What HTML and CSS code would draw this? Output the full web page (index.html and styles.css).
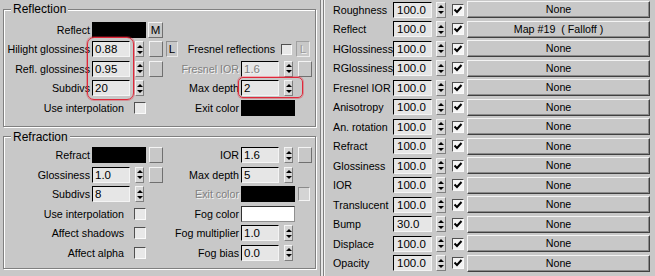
FILE: index.html
```html
<!DOCTYPE html>
<html lang="en">
<head>
    <meta charset="UTF-8">
    <meta name="viewport" content="width=device-width, initial-scale=1.0">
    <title>VRayMtl - Basic parameters / Maps</title>
    <link rel="stylesheet" href="styles.css">
</head>
<body>
    <div class="editor">
        <!-- Basic parameters rollout -->
        <div class="params">
            <fieldset class="group">
                <legend>Reflection</legend>
                <div class="rows">
                    <span class="lbl">Reflect</span>
                    <div class="ctl"><span class="swatch"></span><span class="btn wide">M</span></div>
                    <span></span><span></span>

                    <span class="lbl">Hilight glossiness</span>
                    <div class="ctl"><span class="field">0.88</span><span class="spin"></span><span class="btn"></span><span class="btn letter">L</span></div>
                    <div class="ctl span-right"><span class="chk-text">Fresnel reflections</span><span class="chk small"></span><span class="btn letter-off">L</span></div>

                    <span class="lbl">Refl. glossiness</span>
                    <div class="ctl"><span class="field">0.95</span><span class="spin"></span><span class="btn"></span></div>
                    <span class="lbl off">Fresnel IOR</span>
                    <div class="ctl"><span class="field off">1.6</span><span class="spin"></span><span class="btn"></span></div>

                    <span class="lbl">Subdivs</span>
                    <div class="ctl"><span class="field">20</span><span class="spin"></span></div>
                    <span class="lbl">Max depth</span>
                    <div class="ctl"><span class="field">2</span><span class="spin"></span></div>

                    <div class="chk-line"><span class="chk-text">Use interpolation</span><span class="chk"></span></div>
                    <span class="lbl">Exit color</span>
                    <div class="ctl"><span class="swatch"></span></div>
                </div>
            </fieldset>

            <fieldset class="group refraction">
                <legend>Refraction</legend>
                <div class="rows">
                    <span class="lbl">Refract</span>
                    <div class="ctl"><span class="swatch"></span><span class="btn after-swatch"></span></div>
                    <span class="lbl">IOR</span>
                    <div class="ctl"><span class="field">1.6</span><span class="spin"></span><span class="btn"></span></div>

                    <span class="lbl">Glossiness</span>
                    <div class="ctl"><span class="field">1.0</span><span class="spin"></span><span class="btn"></span></div>
                    <span class="lbl">Max depth</span>
                    <div class="ctl"><span class="field">5</span><span class="spin"></span></div>

                    <span class="lbl">Subdivs</span>
                    <div class="ctl"><span class="field">8</span><span class="spin"></span></div>
                    <span class="lbl off">Exit color</span>
                    <div class="ctl"><span class="swatch"></span><span class="chk off"></span></div>

                    <div class="chk-line"><span class="chk-text">Use interpolation</span><span class="chk"></span></div>
                    <span class="lbl">Fog color</span>
                    <div class="ctl"><span class="swatch white"></span></div>

                    <div class="chk-line"><span class="chk-text">Affect shadows</span><span class="chk"></span></div>
                    <span class="lbl">Fog multiplier</span>
                    <div class="ctl"><span class="field">1.0</span><span class="spin"></span></div>

                    <div class="chk-line"><span class="chk-text">Affect alpha</span><span class="chk"></span></div>
                    <span class="lbl">Fog bias</span>
                    <div class="ctl"><span class="field">0.0</span><span class="spin"></span></div>
                </div>
            </fieldset>

            <!-- marcações em vermelho por cima dos campos -->
            <div class="mark mark-gloss"></div>
            <div class="mark mark-depth"></div>
        </div>

        <div class="splitter"></div>

        <!-- Maps rollout -->
        <div class="maps">
            <div class="map-row"><span class="map-lbl">Roughness</span><span class="field">100.0</span><span class="spin"></span><span class="chk on"></span><span class="map-btn">None</span></div>
            <div class="map-row"><span class="map-lbl">Reflect</span><span class="field">100.0</span><span class="spin"></span><span class="chk on"></span><span class="map-btn">Map #19  ( Falloff )</span></div>
            <div class="map-row"><span class="map-lbl">HGlossiness</span><span class="field">100.0</span><span class="spin"></span><span class="chk on"></span><span class="map-btn">None</span></div>
            <div class="map-row"><span class="map-lbl">RGlossiness</span><span class="field">100.0</span><span class="spin"></span><span class="chk on"></span><span class="map-btn">None</span></div>
            <div class="map-row"><span class="map-lbl">Fresnel IOR</span><span class="field">100.0</span><span class="spin"></span><span class="chk on"></span><span class="map-btn">None</span></div>
            <div class="map-row"><span class="map-lbl">Anisotropy</span><span class="field">100.0</span><span class="spin"></span><span class="chk on"></span><span class="map-btn">None</span></div>
            <div class="map-row"><span class="map-lbl">An. rotation</span><span class="field">100.0</span><span class="spin"></span><span class="chk on"></span><span class="map-btn">None</span></div>
            <div class="map-row"><span class="map-lbl">Refract</span><span class="field">100.0</span><span class="spin"></span><span class="chk on"></span><span class="map-btn">None</span></div>
            <div class="map-row"><span class="map-lbl">Glossiness</span><span class="field">100.0</span><span class="spin"></span><span class="chk on"></span><span class="map-btn">None</span></div>
            <div class="map-row"><span class="map-lbl">IOR</span><span class="field">100.0</span><span class="spin"></span><span class="chk on"></span><span class="map-btn">None</span></div>
            <div class="map-row"><span class="map-lbl">Translucent</span><span class="field">100.0</span><span class="spin"></span><span class="chk on"></span><span class="map-btn">None</span></div>
            <div class="map-row"><span class="map-lbl">Bump</span><span class="field">30.0</span><span class="spin"></span><span class="chk on"></span><span class="map-btn">None</span></div>
            <div class="map-row"><span class="map-lbl">Displace</span><span class="field">100.0</span><span class="spin"></span><span class="chk on"></span><span class="map-btn">None</span></div>
            <div class="map-row"><span class="map-lbl">Opacity</span><span class="field">100.0</span><span class="spin"></span><span class="chk on"></span><span class="map-btn">None</span></div>
        </div>
    </div>
</body>
</html>
```

FILE: styles.css
```css
/* Reset */
* {
    margin: 0;
    padding: 0;
    box-sizing: border-box;
}

body {
    font-family: "Liberation Sans", Arial, sans-serif;
    font-size: 10.7px;
    color: #000;
    background: #c8c8c8;
}

.editor {
    display: flex;
    height: 276px;
    overflow: hidden;
}

/* Painel da esquerda */
.params {
    position: relative;
    width: 321px;
    padding: 2px 0 0 3px;
    border-right: 1px solid #808080;
}

.group {
    width: 311px;
    border: 1px solid #808080;
    box-shadow: 1px 1px 0 #fff, inset 1px 1px 0 #fff;
    padding: 4px 0 8px 1px;
}

.group legend {
    margin-left: 6px;
    padding: 0 2px;
    line-height: 14px;
    font-size: 12px;
    background: #c8c8c8;
}

.refraction {
    margin-top: 3px;
    padding: 2px 0 5px 1px;
}

.rows {
    display: grid;
    grid-template-columns: 87px 83px 66px 1fr;
    grid-auto-rows: 19.5px;
    align-items: center;
}

.lbl {
    text-align: right;
    padding-right: 2px;
    white-space: nowrap;
}

.off {
    color: #808080;
    text-shadow: 1px 1px 0 #f4f4f4;
}

.ctl {
    display: flex;
    align-items: center;
}

.span-right {
    grid-column: 3 / 5;
    justify-content: flex-end;
    padding-right: 2px;
}

.span-right .chk-text {
    margin-right: 6px;
}

.span-right .chk {
    margin-right: 4px;
}

.chk-line {
    grid-column: 1 / 3;
    display: flex;
    align-items: center;
    justify-content: flex-end;
    padding-right: 29px;
}

.chk-line .chk-text {
    margin-right: 10px;
}

.chk-text {
    white-space: nowrap;
}

/* Controles */
.field {
    width: 38px;
    height: 16px;
    line-height: 14px;
    padding-left: 2px;
    background: #e6e6e6;
    border: 1px solid;
    border-color: #000 #f4f4f4 #f4f4f4 #000;
    margin-right: 5px;
    white-space: nowrap;
    overflow: hidden;
    font-size: 11.5px;
    flex-shrink: 0;
}

.spin {
    width: 9px;
    height: 16px;
    display: flex;
    flex-direction: column;
    align-items: center;
    justify-content: center;
    gap: 3px;
    background: #d6d6d6;
    border: 1px solid;
    border-color: #f4f4f4 #808080 #808080 #f4f4f4;
    margin-right: 5px;
    flex-shrink: 0;
}

.spin::before {
    content: "";
    border-left: 3px solid transparent;
    border-right: 3px solid transparent;
    border-bottom: 3px solid #000;
}

.spin::after {
    content: "";
    border-left: 3px solid transparent;
    border-right: 3px solid transparent;
    border-top: 3px solid #000;
}

.btn {
    width: 14px;
    height: 16px;
    line-height: 14px;
    text-align: center;
    background: #c8c8c8;
    border: 1px solid;
    border-color: #f4f4f4 #707070 #707070 #f4f4f4;
    margin-right: 3px;
    font-size: 11.5px;
    flex-shrink: 0;
}

.btn.wide {
    width: 15px;
}

.btn.after-swatch {
    margin-left: 1px;
}

.btn.letter {
    width: 12px;
    border-color: #909090 #e8e8e8 #e8e8e8 #909090;
}

.letter-off {
    width: 14px;
    height: 16px;
    line-height: 14px;
    text-align: center;
    font-size: 11.5px;
    color: #9a9a9a;
    text-shadow: 1px 1px 0 #f4f4f4;
    border: 1px solid;
    border-color: #a0a0a0 #ececec #ececec #a0a0a0;
    flex-shrink: 0;
}

.swatch {
    width: 54px;
    height: 16px;
    background: #000;
    margin-right: 2px;
    flex-shrink: 0;
}

.swatch.white {
    background: #fff;
    border: 1px solid;
    border-color: #303030 #909090 #909090 #303030;
}

.chk {
    width: 12px;
    height: 12px;
    background: #e8e8e8;
    border: 1px solid;
    border-color: #505050 #fafafa #fafafa #505050;
    flex-shrink: 0;
}

.chk.small {
    width: 11px;
    height: 11px;
}

.chk.off {
    height: 14px;
    background: #d4d4d4;
    border-color: #8a8a8a #f4f4f4 #f4f4f4 #8a8a8a;
    margin-left: 1px;
}

.chk.on {
    background: #f4f4f4 url("data:image/svg+xml,%3Csvg xmlns='http://www.w3.org/2000/svg' width='10' height='10'%3E%3Cpolyline points='1.5,4.5 4,7 8.5,2' fill='none' stroke='%23000' stroke-width='2'/%3E%3C/svg%3E") center / 10px 10px no-repeat;
}

/* Marcações vermelhas */
.mark {
    position: absolute;
    border: 1px solid #e0283a;
    box-shadow: 0 0 0 1px rgba(224, 40, 58, 0.35);
    border-radius: 7px;
}

.mark-gloss {
    left: 87px;
    top: 37px;
    width: 47px;
    height: 63px;
}

.mark-depth {
    left: 238px;
    top: 77px;
    width: 65px;
    height: 21px;
    border-radius: 5px;
}

/* Divisor */
.splitter {
    width: 2px;
    background: #e6e6e6;
}

/* Painel dos mapas */
.maps {
    flex: 1;
    border-left: 1px solid #808080;
    box-shadow: inset 1px 0 0 #f4f4f4;
    padding-left: 9px;
}

.map-row {
    display: flex;
    align-items: center;
    height: 19.5px;
}

.map-lbl {
    width: 60px;
    white-space: nowrap;
}

.map-row .field {
    width: 39px;
    padding-left: 3px;
    margin-right: 4px;
}

.map-row .spin {
    width: 10px;
    margin-right: 6px;
}

.map-row .chk {
    margin-right: 3px;
}

.map-btn {
    width: 183px;
    height: 17px;
    line-height: 15px;
    text-align: center;
    white-space: pre;
    background: #c8c8c8;
    border: 1px solid;
    border-color: #f4f4f4 #404040 #404040 #f4f4f4;
    box-shadow: inset -1px -1px 0 #8a8a8a;
}
```
